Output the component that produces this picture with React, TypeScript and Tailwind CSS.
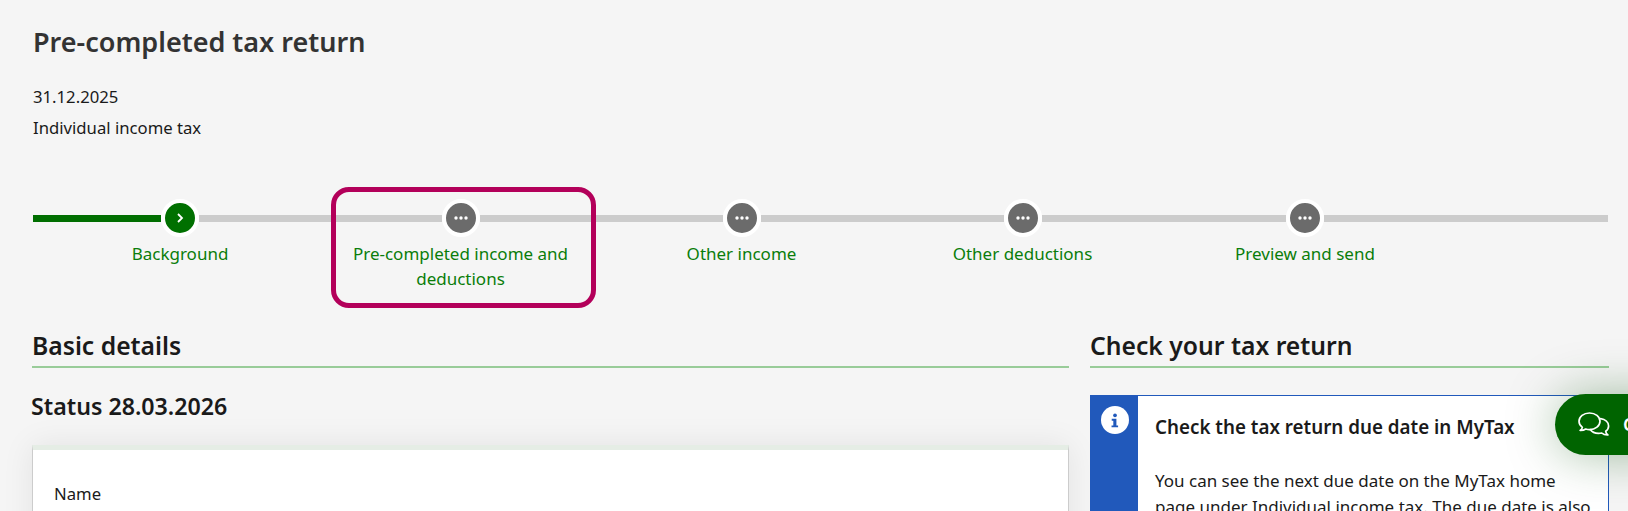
const font = "font-['Noto_Sans',sans-serif]";

const ChatIcon = () => (
  <svg viewBox="0 0 34 26" className="h-[26px] w-[34px]" fill="none" stroke="currentColor" strokeWidth="1.7" strokeLinejoin="round" strokeLinecap="round">
    <path d="M12.5 1C6.6 1 2 4.7 2 9.3c0 2.5 1.3 4.6 3.4 6.1-.3 1.2-1.1 2.3-2.3 3 2.2.1 4.2-.4 5.6-1.4 1.2.4 2.5.6 3.8.6 5.9 0 10.5-3.7 10.5-8.3S18.400 1 12.500 1z" />
    <path d="M23.600 6.600c4.600.7 8 3.700 8 7.400 0 2.100-1.100 4-2.900 5.300.2 1.500 1 2.800 2.200 3.700-2.500.1-4.700-.6-6.200-2-1 .3-2.100.4-3.200.4-3.600 0-6.700-1.500-8.300-3.800" />
  </svg>
);

type StepProps = {
  label: string;
  done?: boolean;
  className: string;
  leftClass: string;
  labelClass?: string;
};

const Step = ({ label, done, className, leftClass, labelClass }: StepProps) => (
  <div className={className}>
    <div className="flex h-[38px] items-center">
      <div className={leftClass} />
      <div className={`flex h-[38px] w-[38px] shrink-0 items-center justify-center rounded-full border-4 border-white text-white ${done ? "bg-[#007000]" : "bg-[#6b6b6b]"}`}>
        {done ? (
          <svg viewBox="0 0 10 10" className="h-[10px] w-[10px]" fill="none" stroke="currentColor" strokeWidth="1.800">
            <path d="M3 1l4 4-4 4" />
          </svg>
        ) : (
          <svg viewBox="0 0 14 4" className="h-[4px] w-[14px]" fill="currentColor">
            <circle cx="2" cy="2" r="1.700" />
            <circle cx="7" cy="2" r="1.700" />
            <circle cx="12" cy="2" r="1.700" />
          </svg>
        )}
      </div>
      <div className="h-[7px] flex-1 bg-[#cccccc]" />
    </div>
    <div className={`mt-[4px] text-center text-[17px] leading-[25px] text-[#0a7d0a] ${labelClass ?? "px-[20px]"}`}>
      {label}
    </div>
  </div>
);

export default function App() {
  return (
    <div className={`relative h-[511px] overflow-hidden bg-[#f5f5f5] text-[#1a1a1a] ${font}`}>
      <div className="pl-[33px] pt-[21px]">
        <h1 className="text-[27px] font-semibold leading-[42px] text-[#333333]">Pre-completed tax return</h1>
        <p className="mt-[22px] text-[16.7px] leading-[24px]">31.12.2025</p>
        <p className="mt-[7px] text-[16.7px] leading-[24px]">Individual income tax</p>
      </div>

      {/* steps */}
      <div className="mt-[59px] flex pl-[33px] pr-[20px]">
        <Step
          done
          label="Background"
          className="w-[287px] shrink-0"
          leftClass="h-[7px] w-[128px] bg-[#006e00]"
          labelClass="w-[294px]"
        />
        <Step label="Pre-completed income and deductions" className="w-[281px] shrink-0" leftClass="h-[7px] flex-1 bg-[#cccccc]" />
        <Step label="Other income" className="w-[281px] shrink-0" leftClass="h-[7px] flex-1 bg-[#cccccc]" />
        <Step label="Other deductions" className="w-[281px] shrink-0" leftClass="h-[7px] flex-1 bg-[#cccccc]" />
        <Step
          label="Preview and send"
          className="flex-1"
          leftClass="h-[7px] w-[123px] bg-[#cccccc]"
          labelClass="w-[284px]"
        />
      </div>

      {/* highlight round step 2 */}
      <div className="absolute left-[331px] top-[187px] h-[121px] w-[265px] rounded-[18px] border-[5px] border-[#b3005a]" />

      <div className="mt-[39px] flex gap-[21px] pl-[32px] pr-[19px]">
        <div className="w-[1037px] shrink-0">
          <h2 className="border-b-2 border-[#99cc99] pb-[4px] text-[24.7px] font-semibold leading-[32px]">Basic details</h2>
          <h3 className="-ml-px mt-[22px] text-[23.2px] font-semibold leading-[32px]">Status 28.03.2026</h3>
          <div className="mt-[23px] h-[200px] border-x border-t-[5px] border-x-[#cccccc] border-t-[#e5ede5] bg-white px-[21px] pt-[32px] shadow-[0_0_30px_rgba(0,0,0,0.08)]">
            <p className="text-[16.7px] leading-[24px]">Name</p>
          </div>
        </div>

        <div className="flex-1">
          <h2 className="border-b-2 border-[#99cc99] pb-[4px] text-[24.7px] font-semibold leading-[32px]">Check your tax return</h2>
          <div className="mt-[27px] flex min-h-[200px] border border-[#2159bb] bg-white">
            <div className="flex w-[47px] shrink-0 justify-center bg-[#2159bb] pt-[10px]">
              <div className="flex h-[28px] w-[28px] items-center justify-center rounded-full bg-white text-[#2159bb]">
                <svg viewBox="0 0 10 16" className="h-[15px] w-[10px]" fill="currentColor">
                  <circle cx="5" cy="2.400" r="2" />
                  <path d="M1.500 6.200h5v7h1.800v2H1.300v-2h1.900v-5H1.500z" />
                </svg>
              </div>
            </div>
            <div className="px-[17px] pt-[18px]">
              <p className="text-[18.8px] font-semibold leading-[26px]">Check the tax return due date in MyTax</p>
              <p className="mt-[28px] text-[17px] leading-[26px]">
                You can see the next due date on the MyTax home page under Individual income tax. The due date is also
              </p>
            </div>
          </div>
        </div>
      </div>

      {/* chat button */}
      <div className="absolute left-[1555px] top-[394px] flex h-[61px] w-[140px] items-center gap-[12px] rounded-l-[31px] bg-[#006400] pl-[22px] text-white shadow-[0_0_50px_rgba(0,80,0,0.35)]">
        <ChatIcon />
        <span className="text-[18px] font-semibold">Chat</span>
      </div>
    </div>
  );
}
